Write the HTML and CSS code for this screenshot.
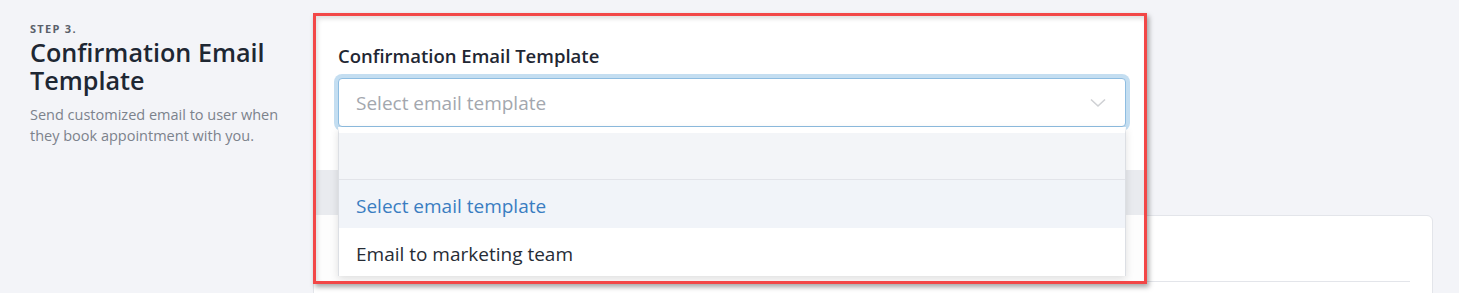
FILE: index.html
```html
<!DOCTYPE html>
<html lang="en">
<head>
<meta charset="utf-8">
<title>Confirmation Email Template</title>
<link rel="stylesheet" href="styles.css">
</head>
<body>
<div class="page">
  <aside class="intro">
    <div class="step">STEP 3.</div>
    <h2 class="title">Confirmation Email Template</h2>
    <p class="desc">Send customized email to user when they book appointment with you.</p>
  </aside>
  <main class="content">
    <section class="card">
      <div class="card-divider"></div>
    </section>
  </main>
</div>

<div class="highlight">
  <div class="hl-inner">
    <label class="field-label">Confirmation Email Template</label>
    <div class="select">
      <span class="placeholder">Select email template</span>
      <svg class="chevron" width="16" height="10" viewBox="0 0 16 10"><path d="M1 1.5 L8 8 L15 1.5" fill="none" stroke="#cfd1d4" stroke-width="1.6"/></svg>
    </div>
    <div class="menu">
      <div class="menu-search"></div>
      <div class="option option-active">Select email template</div>
      <div class="option">Email to marketing team</div>
    </div>
  </div>
</div>
</body>
</html>
```

FILE: styles.css
```css
* { box-sizing: border-box; }
html, body { margin: 0; padding: 0; }
body {
  background: #f3f4f8;
  font-family: "Open Sans", "Noto Sans", sans-serif;
  width: 1459px;
  height: 293px;
  overflow: hidden;
  position: relative;
}
.page {
  display: flex;
  padding-left: 30px;
  height: 293px;
  overflow: hidden;
}
.intro {
  width: 283px;
  padding-top: 21px;
  padding-right: 20px;
}
.step {
  font-size: 11px;
  font-weight: 700;
  letter-spacing: 1.3px;
  color: #5a606a;
  line-height: 15px;
}
.title {
  margin: 2px 0 0;
  font-size: 25.2px;
  font-weight: 600;
  line-height: 28px;
  color: #1e2733;
}
.desc {
  margin: 10px 0 0;
  font-size: 14.5px;
  line-height: 21px;
  color: #7c828c;
}
.content {
  flex: 1;
  padding-top: 215px;
  padding-right: 26px;
}
.card {
  background: #fff;
  border: 1px solid #e3e5ea;
  border-radius: 6px;
  height: 90px;
  padding: 65px 22px 0 22px;
}
.card-divider {
  border-top: 1px solid #e3e5ea;
}

.highlight {
  position: absolute;
  left: 313px;
  top: 13px;
  width: 834px;
  height: 271px;
  border: 3px solid #f24747;
  box-shadow: 2px 3px 5px rgba(0, 0, 0, 0.35);
  overflow: hidden;
  background: linear-gradient(to bottom, #fff 0, #fff 154px, #e9ebef 154px, #e9ebef 199px, #fdfdfd 199px);
}
.hl-inner {
  height: 100%;
  padding: 27px 18px 0 22px;
  box-shadow: inset 2px 3px 4px rgba(0, 0, 0, 0.12);
}
.field-label {
  display: block;
  font-size: 18.5px;
  font-weight: 600;
  color: #1f2733;
  line-height: 25px;
}
.select {
  margin-top: 10px;
  height: 49px;
  border: 1px solid #8ebde1;
  border-radius: 4px;
  background: #fff;
  box-shadow: 0 0 0 4px #c4def1;
  display: flex;
  align-items: center;
  justify-content: space-between;
  padding: 1px 19px 0 17px;
}
.placeholder {
  font-size: 19px;
  color: #a3a7ae;
}
.chevron { display: block; }
.menu {
  position: relative;
  border-top: 6px solid #fff;
  border-left: 1px solid #dcdfe4;
  border-right: 1px solid #dcdfe4;
  background: #fff;
  box-shadow: 0 3px 8px rgba(0, 0, 0, 0.12);
}
.menu-search {
  height: 47px;
  background: #f3f5f8;
  border-bottom: 1px solid #e2e4e9;
}
.option {
  height: 48px;
  display: flex;
  align-items: center;
  padding: 4px 0 0 17px;
  font-size: 19px;
  color: #262c35;
  background: #fff;
}
.option-active {
  background: #f1f4f9;
  color: #3a7dc1;
}
```
